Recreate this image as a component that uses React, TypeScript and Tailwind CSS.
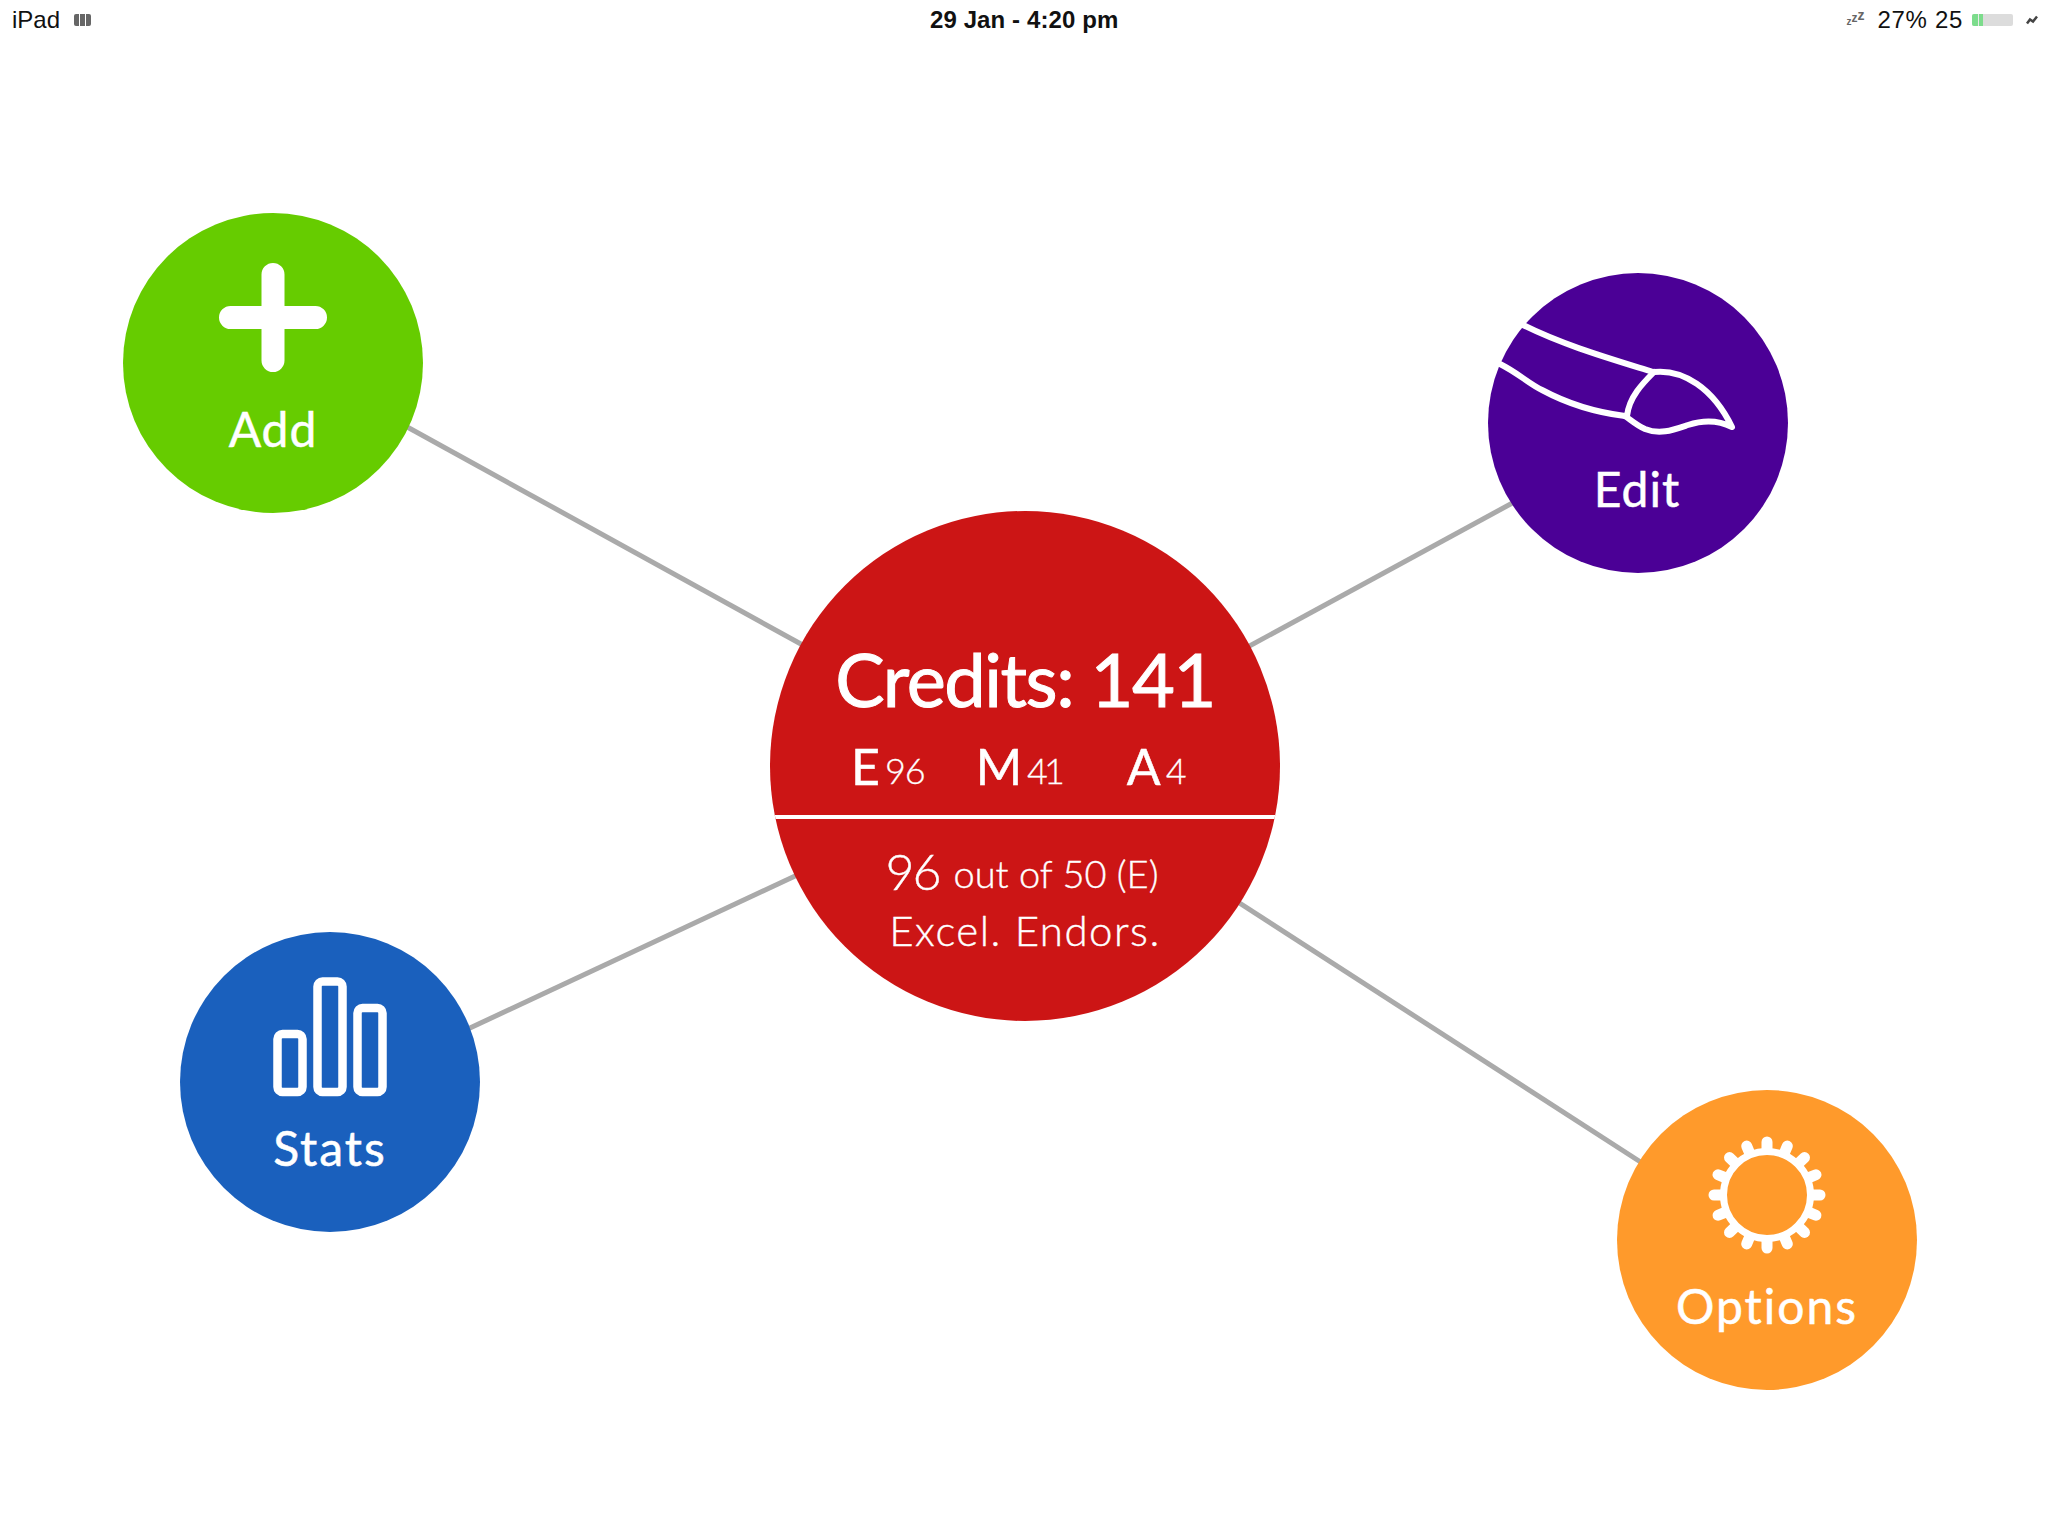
import React from 'react';

const round = "font-['Lato',sans-serif]";

const Plus = () => (
  <svg width="300" height="192" className="block">
    <path d="M150 61.500V147.500M107.500 104.500H192.500" stroke="#fff" strokeWidth="23" strokeLinecap="round" />
  </svg>
);

const Pencil = () => (
  <svg width="300" height="192" className="block" fill="none" stroke="#fff" strokeWidth="6" strokeLinecap="round" strokeLinejoin="round">
    <path d="M35 52C75 72 120 85 165 99" />
    <path d="M12 91C30 100 40 110 54 117C80 131 105 139 137 143" />
    <path d="M166 99C155 110 141 124 139 143" />
    <path d="M166 99C195 96 225 115 244 154C230 147 215 147 200 152C185 157 172 162 157 156C148 152 143 147 137 143" />
  </svg>
);

const Bars = () => (
  <svg width="300" height="192" className="block" fill="none" stroke="#fff" strokeWidth="8.500">
    <rect x="97.500" y="102" width="25" height="58" rx="5" />
    <rect x="137.500" y="49.500" width="25" height="110.500" rx="5" />
    <rect x="177.500" y="76" width="25" height="84" rx="5" />
  </svg>
);

const teeth = Array.from({ length: 16 }, (_, i) => (i * Math.PI) / 8);

const Gear = () => (
  <svg width="300" height="192" className="block" fill="none" stroke="#fff">
    <circle cx="150" cy="105" r="43.500" strokeWidth="7" />
    {teeth.map((a) => (
      <line
        key={a}
        x1={150 + 46 * Math.cos(a)}
        y1={105 + 46 * Math.sin(a)}
        x2={150 + 53 * Math.cos(a)}
        y2={105 + 53 * Math.sin(a)}
        strokeWidth="11"
        strokeLinecap="round"
      />
    ))}
  </svg>
);

const Node = ({ className, label, labelClass, children }: { className: string; label: string; labelClass: string; children: React.ReactNode }) => (
  <div className={`absolute w-[300px] h-[300px] rounded-full flex flex-col items-center text-white ${className}`}>
    {children}
    <span className={`${round} text-[48px] leading-none [-webkit-text-stroke:0.5px_white] ${labelClass}`}>{label}</span>
  </div>
);

const Grade = ({ letter, value, className, valueClass }: { letter: string; value: string; className: string; valueClass: string }) => (
  <div className={`flex items-end gap-[5px] ${className}`}>
    <span className="text-[50px] leading-none [-webkit-text-stroke:0.5px_white]">{letter}</span>
    <span className={`text-[36px] leading-none font-light mb-[3px] [-webkit-text-stroke:0.3px_white] ${valueClass}`}>{value}</span>
  </div>
);

export default function App() {
  return (
    <div className="relative w-[2048px] h-[1536px] bg-white overflow-hidden font-['Liberation_Sans',sans-serif]">
      {/* status bar */}
      <div className="relative flex items-center h-[40px] pl-[12px] text-[24px] text-[#111]">
        <span>iPad</span>
        <div className="ml-[14px] w-[17px] h-[12px] rounded-[2px] bg-[#666] flex justify-evenly">
          <span className="w-px bg-white" />
          <span className="w-px bg-white" />
        </div>
        <span className="absolute left-[930px] font-bold tracking-[0.1px]">29 Jan - 4:20 pm</span>
        <div className="ml-auto flex items-center">
          <div className="flex items-end h-[14px] mr-[13px] text-[#666] font-bold leading-none">
            <span className="text-[10px]">z</span>
            <span className="text-[12px] mb-[3px]">z</span>
            <span className="text-[14px] mb-[5px]">z</span>
          </div>
          <span className="tracking-[0.7px]">27% 25</span>
          <div className="ml-[9px] w-[41px] h-[12px] rounded-[2px] bg-[#dcdcdc] overflow-hidden flex">
            <span className="w-[6px] bg-[#7cdc8c]" />
            <span className="w-px bg-white/40" />
            <span className="w-[4px] bg-[#7cdc8c]" />
          </div>
          <svg width="12" height="10" viewBox="0 0 12 10" fill="none" stroke="#444" strokeWidth="2.500" className="ml-[13px] mr-[10px]">
            <path d="M1 8.500L4 4.500L7 6.500L11 1.500" />
          </svg>
        </div>
      </div>

      {/* spokes */}
      <svg width="2048" height="1536" className="absolute left-0 top-0" stroke="#aaaaaa" strokeWidth="5">
        <line x1="380" y1="412" x2="830" y2="660" />
        <line x1="1540" y1="488" x2="1220" y2="662" />
        <line x1="440" y1="1042" x2="825" y2="862" />
        <line x1="1670" y1="1181" x2="1210" y2="884" />
      </svg>

      <Node className="left-[123px] top-[213px] bg-[#66cc00]" label="Add" labelClass="tracking-[1px]"><Plus /></Node>
      <Node className="left-[1488px] top-[273px] bg-[#4b0096]" label="Edit" labelClass="tracking-[1px] mr-[2px]"><Pencil /></Node>
      <Node className="left-[180px] top-[932px] bg-[#1a60bd]" label="Stats" labelClass="tracking-[2px]"><Bars /></Node>
      <Node className="left-[1617px] top-[1090px] bg-[#ff9a2b]" label="Options" labelClass="tracking-[2px]"><Gear /></Node>

      {/* centre */}
      <div className={`absolute left-[770px] top-[511px] w-[510px] h-[510px] rounded-full bg-[#cc1515] overflow-hidden flex flex-col items-center text-white pt-[131px] ${round}`}>
        <div className="text-[74px] leading-none tracking-[-1.5px] [-webkit-text-stroke:1px_white]">Credits: 141</div>
        <div className="flex self-start pl-[81px] mt-[25px]">
          <Grade letter="E" value="96" className="mr-[51px]" valueClass="tracking-[-1px]" />
          <Grade letter="M" value="41" className="mr-[66px]" valueClass="tracking-[-4px]" />
          <Grade letter="A" value="4" className="" valueClass="" />
        </div>
        <div className="w-full h-[4px] bg-white mt-[24px] shrink-0" />
        <div className="mt-[27px] mr-[6px] flex items-end gap-[14px] font-light [-webkit-text-stroke:0.4px_white]">
          <span className="text-[50px] leading-none tracking-[-2px]">96</span>
          <span className="text-[38px] leading-none mb-[4px]">out of 50 (E)</span>
        </div>
        <div className="mt-[13px] text-[42px] leading-none font-light tracking-[1.5px] [-webkit-text-stroke:0.4px_white]">Excel. Endors.</div>
      </div>
    </div>
  );
}
